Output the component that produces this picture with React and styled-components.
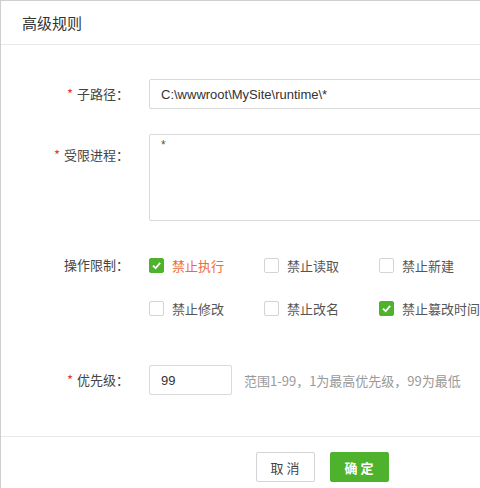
import React from "react";
import styled, { createGlobalStyle } from "styled-components";

const GlobalStyle = createGlobalStyle`
  html, body {
    margin: 0;
    padding: 0;
    background: #fff;
    overflow: hidden;
  }
  body {
    font-family: "Noto Sans CJK SC", "Noto Sans", sans-serif;
    color: #444;
  }
`;

const Dialog = styled.div`
  width: 642px;
  border-top: 1px solid #cfcfcf;
  border-left: 1px solid #cfcfcf;
  border-bottom: 1px solid #cfcfcf;
  background: #fff;
`;

const Header = styled.div`
  height: 43px;
  padding-left: 21px;
  display: flex;
  align-items: center;
  font-size: 15px;
  color: #333;
  border-bottom: 1px solid #e8e8e8;
`;

const Body = styled.div`
  padding: 34px 0 41px;
`;

const Row = styled.div`
  display: flex;
  align-items: ${(p) => (p.top ? "flex-start" : "center")};
  margin-bottom: ${(p) => p.gap || 0}px;
`;

const Label = styled.label`
  width: 128px;
  flex-shrink: 0;
  text-align: right;
  font-size: 13px;
  line-height: 20px;
  color: #444;
  padding-top: ${(p) => p.offset || 0}px;
  margin-right: 20px;
`;

const Star = styled.span`
  color: #e4393c;
  margin-right: 4px;
`;

const Input = styled.input`
  box-sizing: border-box;
  height: 30px;
  width: ${(p) => p.w || 420}px;
  border: 1px solid #d9d9d9;
  border-radius: 2px;
  padding: 0 11px;
  font-family: "Liberation Sans", "Noto Sans CJK SC", sans-serif;
  font-size: 13px;
  color: #333;
  outline: none;
`;

const TextArea = styled.textarea`
  box-sizing: border-box;
  width: 420px;
  height: 87px;
  border: 1px solid #d9d9d9;
  border-radius: 2px;
  padding: 3px 11px;
  font-family: "Liberation Sans", sans-serif;
  font-size: 12px;
  color: #555;
  resize: none;
  outline: none;
`;

const CheckGrid = styled.div`
  display: grid;
  grid-template-columns: repeat(3, 115px);
  row-gap: 23px;
`;

const CheckItem = styled.div`
  display: flex;
  align-items: center;
  height: 20px;
  font-size: 13px;
  color: ${(p) => (p.highlight ? "#f06a3c" : "#555")};
`;

const Box = styled.span`
  box-sizing: border-box;
  width: 15px;
  height: 15px;
  margin-right: 8px;
  border-radius: 2px;
  border: 1px solid ${(p) => (p.checked ? "#4fb22c" : "#d4d4d4")};
  background: ${(p) => (p.checked ? "#4fb22c" : "#fff")};
  display: flex;
  align-items: center;
  justify-content: center;
`;

const Hint = styled.span`
  margin-left: 12px;
  font-size: 13px;
  color: #999;
`;

const Footer = styled.div`
  border-top: 1px solid #e8e8e8;
  padding: 15px 0 6px;
  display: flex;
  justify-content: center;
  gap: 15px;
`;

const Button = styled.button`
  box-sizing: border-box;
  width: 59px;
  height: 30px;
  border-radius: 2px;
  font-family: "Noto Sans CJK SC", sans-serif;
  font-size: 13px;
  letter-spacing: 3px;
  padding: 0 0 0 3px;
  cursor: pointer;
  border: 1px solid ${(p) => (p.primary ? "#4fb22c" : "#d4d4d4")};
  background: ${(p) => (p.primary ? "#4fb22c" : "#fff")};
  color: ${(p) => (p.primary ? "#fff" : "#444")};
  font-weight: ${(p) => (p.primary ? 700 : 400)};
`;

const Tick = () => (
  <svg width="11" height="11" viewBox="0 0 12 12">
    <polyline points="2.2,6.2 5,9 10,3.2" fill="none" stroke="#fff" strokeWidth="2" />
  </svg>
);

const limits = [
  { text: "禁止执行", checked: true, highlight: true },
  { text: "禁止读取" },
  { text: "禁止新建" },
  { text: "禁止修改" },
  { text: "禁止改名" },
  { text: "禁止篡改时间", checked: true },
];

export default function App() {
  return (
    <>
      <GlobalStyle />
      <Dialog>
        <Header>高级规则</Header>
        <Body>
          <Row gap={25}>
            <Label><Star>*</Star>子路径：</Label>
            <Input defaultValue="C:\wwwroot\MySite\runtime\*" />
          </Row>
          <Row top gap={34}>
            <Label offset={11}><Star>*</Star>受限进程：</Label>
            <TextArea defaultValue="*" />
          </Row>
          <Row top gap={47}>
            <Label>操作限制：</Label>
            <CheckGrid>
              {limits.map((item) => (
                <CheckItem key={item.text} highlight={item.highlight}>
                  <Box checked={item.checked}>{item.checked && <Tick />}</Box>
                  {item.text}
                </CheckItem>
              ))}
            </CheckGrid>
          </Row>
          <Row>
            <Label><Star>*</Star>优先级：</Label>
            <Input w={83} defaultValue="99" />
            <Hint>范围1-99，1为最高优先级，99为最低</Hint>
          </Row>
        </Body>
        <Footer>
          <Button>取消</Button>
          <Button primary>确定</Button>
        </Footer>
      </Dialog>
    </>
  );
}
